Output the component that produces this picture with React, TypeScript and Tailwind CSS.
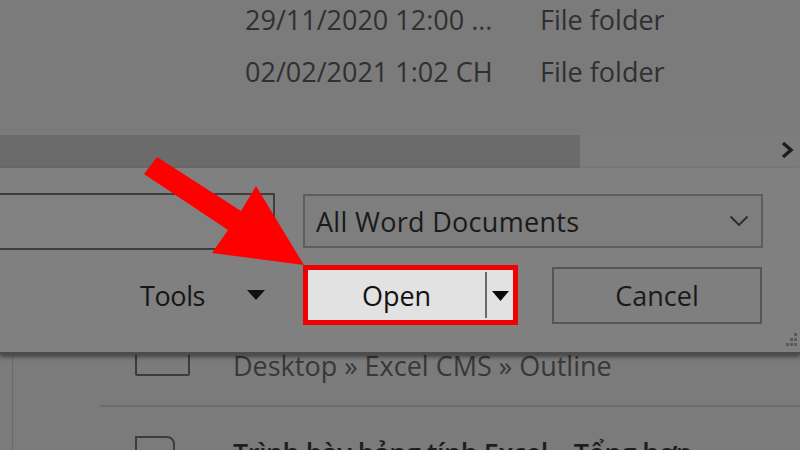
import React from "react";

const font = { fontFamily: '"Open Sans", "Noto Sans", sans-serif' };

const App: React.FC = () => {
  const rows = [
    { date: "29/11/2020 12:00 ...", type: "File folder" },
    { date: "02/02/2021 1:02 CH", type: "File folder" },
  ];

  return (
    <div className="relative w-[800px] h-[450px] overflow-hidden bg-[#7b7b7b] text-[27px] leading-none" style={font}>
      {/* file list (top) */}
      <div className="h-[135px] flex flex-col">
        <div className="mt-[-7px]">
          {rows.map((r, i) => (
            <div key={i} className="h-[52px] flex items-center text-[#303030]">
              <span className="ml-[245px] w-[295px]">{r.date}</span>
              <span>{r.type}</span>
            </div>
          ))}
        </div>
      </div>

      {/* horizontal scrollbar */}
      <div className="h-[33px] flex items-stretch bg-[#7d7d7d]">
        <div className="w-[580px] bg-[#6b6b6b]" />
        <div className="flex-1 flex justify-end items-start pt-[5px] pr-[6px]">
          <svg width="14" height="20" viewBox="0 0 14 20">
            <path d="M3 3 L11 10 L3 17" fill="none" stroke="#1e1e1e" strokeWidth="3.5" />
          </svg>
        </div>
      </div>

      {/* dialog bottom panel */}
      <div className="relative z-10 h-[187px] bg-[#808080] border-b-[3px] border-[#4c4c4c] shadow-[0_2px_4px_rgba(0,0,0,0.45)]">
        <div className="pt-[25px] flex items-start">
          <div className="w-[275px] h-[57px] border-2 border-l-0 border-[#3e3e3e] bg-[#818181]" />
          <div className="ml-[28px] mt-[1px] w-[460px] h-[54px] border-2 border-[#5e5e5e] bg-[#7e7e7e] flex items-center justify-between pl-[11px] pr-[12px]">
            <span className="text-[#1a1a1a] tracking-[0.3px]">All Word Documents</span>
            <svg width="20" height="12" viewBox="0 0 20 12">
              <path d="M1.5 1.5 L10 10 L18.5 1.5" fill="none" stroke="#2a2a2a" strokeWidth="1.8" />
            </svg>
          </div>
        </div>

        <div className="mt-[15px] flex items-start">
          <div className="ml-[140px] w-[163px] h-[60px] flex items-center text-[#161616]">
            <span className="tracking-[-0.4px]">Tools</span>
            <svg className="ml-[42px]" width="18" height="10" viewBox="0 0 18 10">
              <path d="M0 0 H18 L9 10 Z" fill="#111" />
            </svg>
          </div>
          <div className="w-[215px] h-[60px] border-[5px] border-[#f00000] bg-[#e2e2e2] flex items-stretch">
            <div className="w-[177px] flex items-center justify-center text-[#121212]">Open</div>
            <div className="my-[2px] w-[2px] bg-[#6a6a6a]" />
            <div className="flex-1 flex items-center justify-center pt-[2px]">
              <svg width="17" height="10" viewBox="0 0 17 10">
                <path d="M0 0 H17 L8.5 10 Z" fill="#0a0a0a" />
              </svg>
            </div>
          </div>
          <div className="ml-[34px] mt-[2px] w-[210px] h-[57px] border-2 border-[#555555] bg-[#7f7f7f] flex items-center justify-center text-[#1a1a1a]">
            Cancel
          </div>
        </div>

        {/* resize grip */}
        <svg className="absolute right-[2px] bottom-[3px]" width="18" height="18" viewBox="0 0 18 18">
          {[
            [14, 2],
            [10, 7],
            [14, 7],
            [6, 12],
            [10, 12],
            [14, 12],
          ].map(([x, y], i) => (
            <rect key={i} x={x} y={y} width="3" height="3" fill="#5a5a5a" />
          ))}
        </svg>
      </div>

      {/* recent list (behind panel) */}
      <div className="relative h-[95px] bg-[#7b7b7b]">
        <div className="absolute left-[12px] top-0 bottom-0 w-px bg-[#6a6a6a]" />
        <div className="h-[50px] flex items-start">
          <div className="ml-[135px] mt-[-12px] w-[55px] h-[33px] border-2 border-[#3c3c3c] rounded-[2px]" />
          <span className="ml-[43px] mt-[-3px] text-[#383838]">Desktop » Excel CMS » Outline</span>
        </div>
        <div className="ml-[100px] h-[2px] bg-[#6c6c6c]" />
        <div className="flex items-start pt-[29px]">
          <div className="ml-[135px] w-[40px] h-[30px] border-2 border-[#3c3c3c] rounded-tr-[8px]" />
          <span className="ml-[58px] mt-[3px] text-[#1e1e1e] font-semibold tracking-[-0.5px]">Trình bày bảng tính Excel – Tổng hợp</span>
        </div>
      </div>

      {/* red annotation arrow */}
      <svg className="absolute inset-0 z-20 pointer-events-none" width="800" height="450" viewBox="0 0 800 450">
        <polygon points="157,157 241,211 256,186 304,265 212,253 228,230 144,174" fill="#ff0000" />
      </svg>
    </div>
  );
};

export default App;
